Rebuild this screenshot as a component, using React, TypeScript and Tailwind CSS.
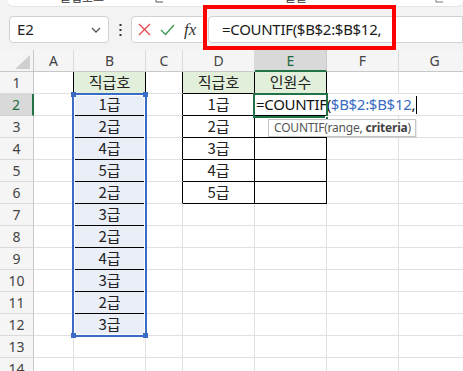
import React from "react";

const COLS = ["A", "B", "C", "D", "E", "F", "G"];
const COLW = ["w-[40px]", "w-[72px]", "w-[37px]", "w-[72px]", "w-[72px]", "w-[72px]", "w-[72px]"];
const BVALS = ["1급", "2급", "4급", "5급", "2급", "3급", "2급", "4급", "3급", "2급", "3급"];
const DVALS = ["1급", "2급", "3급", "4급", "5급"];

const KR = "font-['Noto_Sans_CJK_KR','Noto_Sans',sans-serif]";

function cellClass(r: number, c: number): string {
  let right = "border-r-[#e1e1e1]";
  let bottom = "border-b-[#e1e1e1]";
  let bg = "";
  if (c === 1 && r >= 1 && r <= 12) {
    right = "border-r-black";
    bottom = "border-b-black";
    bg = r === 1 ? "bg-[#e2efda]" : "bg-[#e9eef7]";
  }
  if (c === 0 && r >= 1 && r <= 12) right = "border-r-black";
  if (c === 2 && r >= 1 && r <= 6) right = "border-r-black";
  if ((c === 3 || c === 4) && r >= 1 && r <= 6) {
    right = "border-r-black";
    bottom = "border-b-black";
    if (r === 1) bg = "bg-[#e2efda]";
  }
  return `${COLW[c]} h-[22px] shrink-0 border-r border-b ${right} ${bottom} ${bg} flex items-center justify-center text-[15px] text-[#222] ${KR}`;
}

function cellText(r: number, c: number): string {
  if (c === 1) {
    if (r === 1) return "직급호";
    if (r >= 2 && r <= 12) return BVALS[r - 2];
  }
  if (c === 3) {
    if (r === 1) return "직급호";
    if (r >= 2 && r <= 6) return DVALS[r - 2];
  }
  if (c === 4 && r === 1) return "인원수";
  return "";
}

export default function App() {
  const rows = Array.from({ length: 14 }, (_, i) => i + 1);
  return (
    <div className="relative w-[463px] h-[371px] overflow-hidden bg-[#f3f3f3] font-['Noto_Sans',sans-serif]">
      {/* ribbon bottom strip */}
      <div className="relative ml-[8px] h-[7px] bg-white rounded-b-[6px] overflow-hidden border-b border-[#e4e4e4]">
        <span className={`absolute left-[52px] top-[-12px] text-[12px] text-[#333] ${KR}`}>클립보드</span>
        <svg className="absolute left-[147px] top-[-6px]" width="9" height="9" viewBox="0 0 9 9">
          <path d="M1 1v7h7" fill="none" stroke="#555" strokeWidth="1" />
          <path d="M4 5l4 -4" stroke="#555" strokeWidth="1" />
        </svg>
        <span className={`absolute left-[277px] top-[-12px] text-[12px] text-[#333] ${KR}`}>글꼴</span>
        <svg className="absolute left-[427px] top-[-6px]" width="9" height="9" viewBox="0 0 9 9">
          <path d="M1 1v7h7" fill="none" stroke="#777" strokeWidth="1" />
          <path d="M4 5l4 -4" stroke="#777" strokeWidth="1" />
        </svg>
      </div>

      {/* formula bar */}
      <div className="mt-[9px] h-[27px] flex items-stretch">
        <div className="ml-[9px] w-[100px] bg-white border border-[#d2d2d2] rounded-[4px] flex items-center justify-between pl-[7px] pr-[7px]">
          <span className="text-[15px] text-[#222] font-['Noto_Sans',sans-serif]">E2</span>
          <svg width="10" height="6" viewBox="0 0 10 6">
            <path d="M1 1l4 4 4-4" fill="none" stroke="#555" strokeWidth="1.3" />
          </svg>
        </div>
        <div className="w-[22px] flex items-center justify-center">
          <svg width="3" height="12" viewBox="0 0 3 12">
            <rect x="0.5" y="0" width="2" height="2" fill="#333" />
            <rect x="0.5" y="5" width="2" height="2" fill="#333" />
            <rect x="0.5" y="10" width="2" height="2" fill="#333" />
          </svg>
        </div>
        <div className="w-[76px] bg-white border border-[#d2d2d2] rounded-[4px] flex items-center pl-[6px] gap-[9px]">
          <svg width="13" height="13" viewBox="0 0 13 13">
            <path d="M1 1l11 11M12 1L1 12" stroke="#e8464c" strokeWidth="1.3" />
          </svg>
          <svg width="15" height="12" viewBox="0 0 15 12">
            <path d="M1 6l4.5 4.5L14 1" fill="none" stroke="#3a9a4f" strokeWidth="1.3" />
          </svg>
          <span className="text-[17px] italic text-[#333] font-['Liberation_Serif',serif] leading-none">fx</span>
        </div>
        <div className="ml-[1px] flex-1 bg-white border border-[#d2d2d2] rounded-l-[4px] flex items-center pl-[13px]">
          <span className="text-[15px] tracking-[-0.3px] text-[#1a1a1a] whitespace-nowrap font-['Noto_Sans',sans-serif]">=COUNTIF($B$2:$B$12,</span>
        </div>
      </div>
      <div className="h-[7px]" />

      {/* sheet */}
      <div className="relative bg-white">
        <div className="flex h-[22px] bg-[#f5f5f5]">
          <div className="relative w-[34px] h-[22px] shrink-0 border-r border-b border-r-[#c8c8c8] border-b-[#c8c8c8]">
            <svg className="absolute left-[15px] top-[5px]" width="15" height="14" viewBox="0 0 15 14">
              <path d="M15 0L15 14L0 14Z" fill="#cfcfcf" />
            </svg>
          </div>
          {COLS.map((c, i) => (
            <div
              key={c}
              className={`${COLW[i]} h-[22px] shrink-0 flex items-center justify-center text-[14px] ${
                c === "E"
                  ? "bg-[#d9d9d9] border-b-2 border-b-[#217346] border-r border-r-[#c8c8c8] text-[#1e6b40]"
                  : "border-r border-b border-r-[#dadada] border-b-[#c8c8c8] text-[#444]"
              }`}
            >
              {c}
            </div>
          ))}
        </div>

        {rows.map((r) => (
          <div key={r} className="flex h-[22px]">
            <div
              className={`w-[34px] h-[22px] shrink-0 flex items-center justify-center text-[14px] border-b ${
                r === 2
                  ? "bg-[#d9d9d9] border-r-2 border-r-[#217346] border-b-[#d0d0d0] text-[#1e6b40]"
                  : "bg-[#f5f5f5] border-r border-r-[#c8c8c8] border-b-[#dadada] text-[#444]"
              }`}
            >
              {r}
            </div>
            {COLS.map((c, i) => (
              <div key={c} className={cellClass(r, i)}>
                {cellText(r, i)}
              </div>
            ))}
          </div>
        ))}

        {/* referenced range B2:B12 */}
        <div className="absolute left-[72px] top-[43px] w-[75px] h-[244px] border-2 border-[#3a6cc6] shadow-[inset_0_0_0_1px_#ffffff]" />
        <div className="absolute left-[71px] top-[42px] w-[5px] h-[5px] bg-[#3a6cc6]" />
        <div className="absolute left-[143px] top-[42px] w-[5px] h-[5px] bg-[#3a6cc6]" />
        <div className="absolute left-[71px] top-[283px] w-[5px] h-[5px] bg-[#3a6cc6]" />
        <div className="absolute left-[143px] top-[283px] w-[5px] h-[5px] bg-[#3a6cc6]" />

        {/* editing text in E2 overflowing */}
        <div className="absolute left-[256px] top-[44px] h-[21px] w-[162px] bg-white flex items-center">
          <span className="text-[15px] tracking-[-0.3px] whitespace-nowrap text-[#111] font-['Noto_Sans',sans-serif]">
            =COUNTIF(<span className="text-[#3a6cc6]">$B$2:$B$12</span>,
          </span>
          <span className="ml-[1px] w-[1px] h-[18px] bg-black" />
        </div>

        {/* active cell E2 */}
        <div className="absolute left-[253px] top-[43px] w-[75px] h-[25px] border-2 border-[#217346]" />
        <div className="absolute left-[325px] top-[66px] w-[4px] h-[4px] bg-[#217346] border border-white" />

        {/* tooltip */}
        <div className="absolute left-[268px] top-[69px] w-[148px] h-[18px] bg-white border border-[#c6c6c6] shadow-[1px_1px_1px_rgba(0,0,0,0.08)] flex items-center pl-[5px]">
          <span className="text-[12px] tracking-[-0.2px] text-[#555] whitespace-nowrap font-['Noto_Sans',sans-serif] leading-none">
            COUNTIF(range, <b className="font-bold text-[#444]">criteria</b>)
          </span>
        </div>
      </div>

      {/* red annotation box */}
      <div className="absolute left-[203px] top-[5px] w-[193px] h-[45px] border-[4px] border-[#ff0000]" />
    </div>
  );
}
